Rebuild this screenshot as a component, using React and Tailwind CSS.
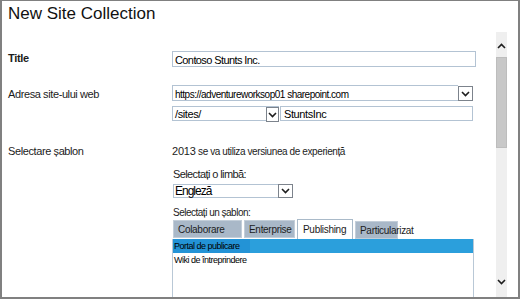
const font = "font-['Liberation_Sans',Arial,sans-serif]"

function DropButton({ w = 15, h = 15 }) {
  return (
    <div
      className="flex items-center justify-center border border-[#7c838c] bg-white shrink-0"
      style={{ width: w, height: h }}
    >
      <svg width="9" height="6" viewBox="0 0 9 6">
        <path d="M1 1l3.5 3.5L8 1" stroke="#1e1e1e" strokeWidth="1.6" fill="none" />
      </svg>
    </div>
  )
}

function Chevron({ up }) {
  return (
    <svg width="9" height="6" viewBox="0 0 9 6">
      <path d={up ? 'M1 5l3.5-3.5L8 5' : 'M1 1l3.5 3.5L8 1'} stroke="#1e1e1e" strokeWidth="1.6" fill="none" />
    </svg>
  )
}

function Tab({ label, active, className }) {
  return (
    <div
      className={
        'shrink-0 whitespace-nowrap text-[10px] tracking-[-0.3px] text-[#1c1c1c] ' +
        (active
          ? 'h-[20px] bg-white border border-b-0 border-[#a9bac9] pl-[5px] pt-[3px] leading-[14px]'
          : 'bg-[#a9b8c8] border border-[#c3ced9] pl-[4px] leading-[14px] ') +
        ' ' +
        className
      }
    >
      {label}
    </div>
  )
}

export default function App() {
  return (
    <div className={`${font} w-[520px] h-[299px] bg-white border-t border-l-2 border-r-2 border-b-2 border-[#808080] flex overflow-hidden`}>
      <div className="w-[494px] flex flex-col shrink-0">
        <div className="h-[50px] pl-[6px] pt-[3px] text-[17px] leading-[20px] text-[#111]">New Site Collection</div>

        {/* Title */}
        <div className="flex h-[16px]">
          <div className="w-[170px] pl-[6px] text-[11px] leading-[14px] font-bold tracking-[-0.3px] text-[#1c1c1c]">Title</div>
          <div className="w-[304px] h-[16px] border border-[#b3c3d3] pl-[2px] pt-[2px] text-[11px] leading-[13px] tracking-[-0.6px] text-black overflow-hidden">
            Contoso Stunts Inc.
          </div>
        </div>

        {/* Address */}
        <div className="flex mt-[18px]">
          <div className="w-[170px] pl-[6px] pt-[2px] text-[11px] leading-[14px] tracking-[-0.4px] text-[#1c1c1c]">Adresa site-ului web</div>
          <div className="flex flex-col gap-[5px]">
            <div className="flex items-end w-[301px] h-[16px]">
              <div className="flex-1 h-[16px] border-y border-l border-[#b3c3d3] pl-[2px] pt-[2px] text-[10px] leading-[13px] tracking-[-0.5px] text-black overflow-hidden whitespace-nowrap">
                https://adventureworksop01 sharepoint.com
              </div>
              <DropButton w={15} h={15} />
            </div>
            <div className="flex gap-[1px]">
              <div className="flex w-[107px] h-[15px] border-y border-l border-[#b3c3d3]">
                <div className="flex-1 pl-[2px] pt-[1px] text-[11px] leading-[13px] tracking-[-0.4px] text-black">/sites/</div>
                <DropButton w={13} h={15} />
              </div>
              <div className="w-[193px] h-[15px] border border-[#b3c3d3] pl-[3px] pt-[1px] text-[11px] leading-[13px] tracking-[-0.4px] text-black">
                StuntsInc
              </div>
            </div>
          </div>
        </div>

        {/* Template */}
        <div className="flex mt-[23px] flex-1">
          <div className="w-[170px] pl-[6px] text-[11px] leading-[14px] tracking-[-0.4px] text-[#1c1c1c]">Selectare șablon</div>
          <div className="flex flex-col flex-1">
            <div className="text-[10px] leading-[14px] tracking-[-0.4px] text-[#1c1c1c] whitespace-nowrap">
              <span className="text-[11px] tracking-[-0.2px]">2013</span> se va utiliza versiunea de experiență
            </div>
            <div className="mt-[8px] pl-[1px] text-[11px] leading-[14px] tracking-[-0.6px] text-[#1c1c1c]">Selectați o limbă:</div>
            <div className="mt-[3px] ml-[1px] flex w-[120px] h-[14px]">
              <div className="flex-1 border-y border-l border-[#b3c3d3] pl-[1px] text-[12px] leading-[12px] tracking-[-1px] text-black">Engleză</div>
              <DropButton w={15} h={14} />
            </div>
            <div className="mt-[8px] pl-[1px] text-[10px] leading-[13px] tracking-[-0.5px] text-[#1c1c1c]">Selectați un șablon:</div>
            <div className="flex items-end gap-[2px] h-[20px] pl-[1px]">
              <Tab label="Colaborare" className="w-[69px] h-[18px] mb-[1px] pt-[2px]" />
              <Tab label="Enterprise" className="w-[51px] h-[18px] mb-[1px] pt-[2px]" />
              <Tab label="Publishing" active className="w-[56px]" />
              <Tab label="Particularizat" className="w-[43px] h-[18px] pt-[2px] overflow-visible bg-[#a0b1c3]" />
            </div>
            <div className="w-[302px] flex-1 border-x border-[#b9c8d6] text-[9px] leading-[14px] tracking-[-0.5px] text-black">
              <div className="h-[14px] bg-[#2b9fdc] flex">
                <span className="bg-[#2393d6] pl-[1px] pr-[10px]">Portal de publicare</span>
              </div>
              <div className="h-[14px] pl-[1px]">Wiki de întreprindere</div>
            </div>
          </div>
        </div>
      </div>

      {/* Scrollbar */}
      <div className="flex-1 flex">
        <div className="w-[11px] mt-[31px] bg-[#efefef] flex flex-col items-center">
          <div className="h-[25px] w-full flex items-center justify-center pt-[3px]">
            <Chevron up />
          </div>
          <div className="h-[91px] w-full bg-[#c8c8c8] border border-[#bdbdbd]" />
          <div className="flex-1" />
          <div className="h-[22px] w-full flex items-start justify-center pt-[4px]">
            <Chevron />
          </div>
        </div>
      </div>
    </div>
  )
}
